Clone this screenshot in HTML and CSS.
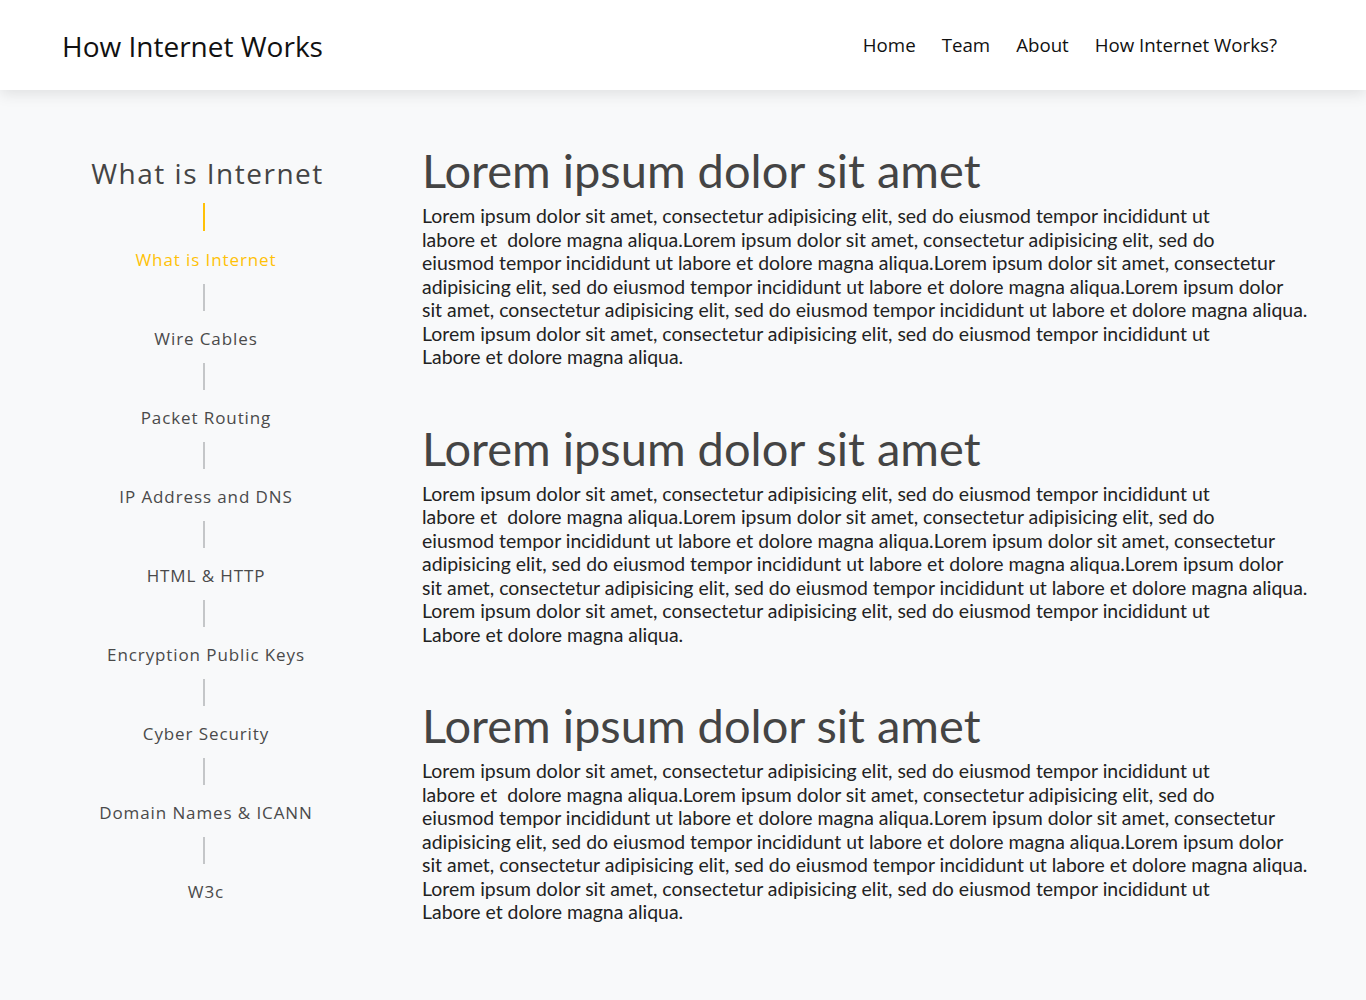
FILE: index.html
```html
<!DOCTYPE html>
<html lang="en">
<head>
<meta charset="utf-8">
<title>How Internet Works</title>
<link rel="stylesheet" href="styles.css">
</head>
<body>
<header class="topbar">
  <div class="brand">How Internet Works</div>
  <nav class="nav">
    <a href="#">Home</a>
    <a href="#">Team</a>
    <a href="#">About</a>
    <a href="#">How Internet Works?</a>
  </nav>
</header>
<main class="layout">
  <aside class="sidebar">
    <h2 class="side-title">What is Internet</h2>
    <span class="rule active"></span>
    <a class="item active" href="#">What is Internet</a>
    <span class="rule"></span>
    <a class="item" href="#">Wire Cables</a>
    <span class="rule"></span>
    <a class="item" href="#">Packet Routing</a>
    <span class="rule"></span>
    <a class="item" href="#">IP Address and DNS</a>
    <span class="rule"></span>
    <a class="item" href="#">HTML &amp; HTTP</a>
    <span class="rule"></span>
    <a class="item" href="#">Encryption Public Keys</a>
    <span class="rule"></span>
    <a class="item" href="#">Cyber Security</a>
    <span class="rule"></span>
    <a class="item" href="#">Domain Names &amp; ICANN</a>
    <span class="rule"></span>
    <a class="item" href="#">W3c</a>
  </aside>
  <section class="content">
    <article class="post">
      <h1>Lorem ipsum dolor sit amet</h1>
      <p>Lorem ipsum dolor sit amet, consectetur adipisicing elit, sed do eiusmod tempor incididunt ut<br>labore et&nbsp; dolore magna aliqua.Lorem ipsum dolor sit amet, consectetur adipisicing elit, sed do<br>eiusmod tempor incididunt ut labore et dolore magna aliqua.Lorem ipsum dolor sit amet, consectetur<br>adipisicing elit, sed do eiusmod tempor incididunt ut labore et dolore magna aliqua.Lorem ipsum dolor<br>sit amet, consectetur adipisicing elit, sed do eiusmod tempor incididunt ut labore et dolore magna aliqua.<br>Lorem ipsum dolor sit amet, consectetur adipisicing elit, sed do eiusmod tempor incididunt ut<br>Labore et dolore magna aliqua.</p>
    </article>
    <article class="post">
      <h1>Lorem ipsum dolor sit amet</h1>
      <p>Lorem ipsum dolor sit amet, consectetur adipisicing elit, sed do eiusmod tempor incididunt ut<br>labore et&nbsp; dolore magna aliqua.Lorem ipsum dolor sit amet, consectetur adipisicing elit, sed do<br>eiusmod tempor incididunt ut labore et dolore magna aliqua.Lorem ipsum dolor sit amet, consectetur<br>adipisicing elit, sed do eiusmod tempor incididunt ut labore et dolore magna aliqua.Lorem ipsum dolor<br>sit amet, consectetur adipisicing elit, sed do eiusmod tempor incididunt ut labore et dolore magna aliqua.<br>Lorem ipsum dolor sit amet, consectetur adipisicing elit, sed do eiusmod tempor incididunt ut<br>Labore et dolore magna aliqua.</p>
    </article>
    <article class="post">
      <h1>Lorem ipsum dolor sit amet</h1>
      <p>Lorem ipsum dolor sit amet, consectetur adipisicing elit, sed do eiusmod tempor incididunt ut<br>labore et&nbsp; dolore magna aliqua.Lorem ipsum dolor sit amet, consectetur adipisicing elit, sed do<br>eiusmod tempor incididunt ut labore et dolore magna aliqua.Lorem ipsum dolor sit amet, consectetur<br>adipisicing elit, sed do eiusmod tempor incididunt ut labore et dolore magna aliqua.Lorem ipsum dolor<br>sit amet, consectetur adipisicing elit, sed do eiusmod tempor incididunt ut labore et dolore magna aliqua.<br>Lorem ipsum dolor sit amet, consectetur adipisicing elit, sed do eiusmod tempor incididunt ut<br>Labore et dolore magna aliqua.</p>
    </article>
  </section>
</main>
</body>
</html>
```

FILE: styles.css
```css
* { box-sizing: border-box; }
html, body { margin: 0; padding: 0; }
body {
  background: #f8f9fa;
  font-family: "Lato", "Open Sans", sans-serif;
  color: #222;
  min-height: 1000px;
}
.topbar {
  height: 90px;
  background: #fff;
  display: flex;
  align-items: center;
  justify-content: space-between;
  padding: 0 89px 0 62px;
  box-shadow: 0 4px 14px rgba(0,0,0,0.10);
  position: relative;
}
.brand {
  font-family: "Open Sans", sans-serif;
  font-size: 28px;
  color: #111;
  margin-top: 1px;
}
.nav {
  display: flex;
  gap: 26px;
  margin-bottom: 2px;
}
.nav a {
  font-family: "Open Sans", sans-serif;
  font-size: 18.7px;
  color: #111;
  text-decoration: none;
}
.layout {
  display: grid;
  grid-template-columns: 412px 1fr;
}
.sidebar {
  display: flex;
  flex-direction: column;
  align-items: center;
  padding-top: 65px;
  font-family: "Open Sans", sans-serif;
}
.side-title {
  margin: 0 0 0 3px;
  font-size: 28px;
  line-height: 36px;
  font-weight: 400;
  color: #444;
  letter-spacing: 1.5px;
}
.rule {
  display: block;
  width: 2px;
  height: 27px;
  background: #c4c6c8;
  margin: 10px 4px 14px 0;
}
.rule.active {
  background: #ffc107;
  margin: 12px 4px 15px 0;
  height: 28px;
}
.item {
  font-size: 17px;
  line-height: 28px;
  color: #4a4a4a;
  text-decoration: none;
  letter-spacing: 0.9px;
}
.item.active { color: #ffc107; }
.content {
  padding-top: 52px;
  padding-left: 10px;
}
.post { margin-bottom: 51px; }
.post h1 {
  margin: 0;
  font-family: "Lato", sans-serif;
  font-weight: 400;
  font-size: 47px;
  line-height: 56px;
  color: #444;
}
.post p {
  margin: 6px 0 0;
  font-size: 19.45px;
  line-height: 23.5px;
  color: #222;
  white-space: nowrap;
}
```
